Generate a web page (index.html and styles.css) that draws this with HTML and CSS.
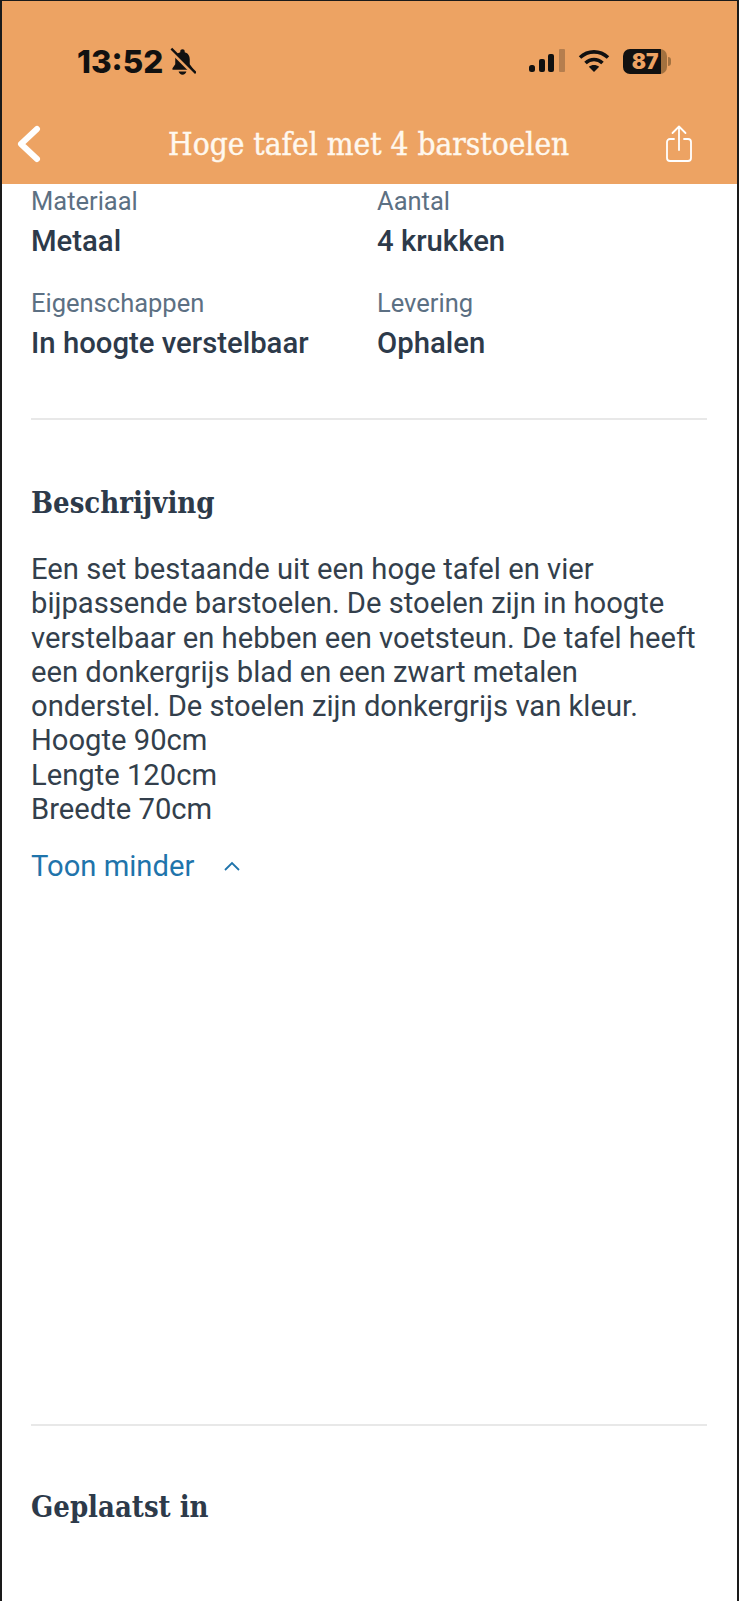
FILE: index.html
```html
<!DOCTYPE html>
<html lang="en">
  <head>
    <meta charset="UTF-8" />
    <title>Hoge tafel met 4 barstoelen</title>
    <link rel="stylesheet" href="styles.css">
  </head>
  <body>
    <div class="phone">
      <!-- Orange top bar -->
      <header class="topbar">
        <div class="status">
          <div class="status-left">
            <span class="time">13:52</span>
            <svg class="bell" width="27" height="29" viewBox="0 0 24 26">
              <path d="M12 2c-1.200 0-2 .8-2 2v.6C6.800 5.500 5.500 8 5.500 11v4.500L3 19v1.500h18V19l-2.500-3.500V11c0-3-1.300-5.500-4.500-6.400V4c0-1.200-.8-2-2-2z" fill="#111"/>
              <path d="M8.500 22h7c-.4 1.700-1.800 2.800-3.500 2.800S8.900 23.700 8.500 22z" fill="#111"/>
              <path d="M2 4l20 20" stroke="#eda363" stroke-width="3"/>
              <path d="M2 1.500l22 22" stroke="#111" stroke-width="2.200"/>
            </svg>
          </div>
          <div class="status-right">
            <svg width="36" height="26" viewBox="0 0 36 26">
              <rect x="0" y="17" width="6" height="7" rx="2.500" fill="#111"/>
              <rect x="10" y="11" width="6" height="13" rx="2" fill="#111"/>
              <rect x="19" y="6" width="6" height="18" rx="2" fill="#111"/>
              <rect x="30" y="1" width="6" height="23" rx="1" fill="#111" opacity="0.25"/>
            </svg>
            <svg class="wifi" width="32" height="24" viewBox="0 0 32 24">
              <path d="M2 8.500C10 1 22 1 30 8.500" fill="none" stroke="#111" stroke-width="3.600"/>
              <path d="M7.500 14c5-4.600 12-4.600 17 0" fill="none" stroke="#111" stroke-width="3.600"/>
              <path d="M16 23l-5.200-5.300c3-2.400 7.400-2.400 10.400 0z" fill="#111"/>
            </svg>
            <div class="battery"><span>87</span></div>
          </div>
        </div>
        <div class="navbar">
          <svg class="back" width="28" height="38" viewBox="0 0 28 38">
            <path d="M22 4L6 19l16 15" fill="none" stroke="#fff" stroke-width="6" stroke-linecap="round" stroke-linejoin="round"/>
          </svg>
          <h1>Hoge tafel met 4 barstoelen</h1>
          <svg class="share" width="28" height="38" viewBox="0 0 28 38">
            <path d="M14 25V2M7.500 8L14 1.500 20.500 8" fill="none" stroke="#fff" stroke-width="1.800" stroke-linecap="round" stroke-linejoin="round"/>
            <path d="M9 14H5a3 3 0 0 0-3 3v16a3 3 0 0 0 3 3h18a3 3 0 0 0 3-3V17a3 3 0 0 0-3-3h-4" fill="none" stroke="#fff" stroke-width="1.800" stroke-linecap="round"/>
          </svg>
        </div>
      </header>

      <main class="content">
        <div class="specs">
          <div class="spec">
            <div class="spec-label">Materiaal</div>
            <div class="spec-value">Metaal</div>
          </div>
          <div class="spec">
            <div class="spec-label">Aantal</div>
            <div class="spec-value">4 krukken</div>
          </div>
          <div class="spec">
            <div class="spec-label">Eigenschappen</div>
            <div class="spec-value">In hoogte verstelbaar</div>
          </div>
          <div class="spec">
            <div class="spec-label">Levering</div>
            <div class="spec-value">Ophalen</div>
          </div>
        </div>

        <hr class="divider" />

        <section class="description">
          <h2>Beschrijving</h2>
          <p>Een set bestaande uit een hoge tafel en vier<br>bijpassende barstoelen. De stoelen zijn in hoogte<br>verstelbaar en hebben een voetsteun. De tafel heeft<br>een donkergrijs blad en een zwart metalen<br>onderstel. De stoelen zijn donkergrijs van kleur.<br>Hoogte 90cm<br>Lengte 120cm<br>Breedte 70cm</p>
          <div class="toggle">
            <span>Toon minder</span>
            <svg width="18" height="12" viewBox="0 0 18 12">
              <path d="M2 10l7-7 7 7" fill="none" stroke="#1f74ab" stroke-width="1.800"/>
            </svg>
          </div>
        </section>

        <hr class="divider lower" />

        <section class="placed">
          <h2>Geplaatst in</h2>
        </section>
      </main>
    </div>
  </body>
</html>
```

FILE: styles.css
```css
html,
body {
  margin: 0;
  padding: 0;
  background: #ffffff;
}

.phone {
  width: 739px;
  height: 1601px;
  box-sizing: border-box;
  border-left: 2px solid #1a1a1a;
  border-right: 2px solid #1a1a1a;
  border-top: 1px solid #1a1a1a;
  overflow: hidden;
  font-family: Roboto, sans-serif;
  color: #2d3a4a;
}

.topbar {
  background: #eda363;
  height: 183px;
}

.status {
  display: flex;
  justify-content: space-between;
  padding: 44px 0 0 75px;
  height: 32px;
}

.status-left {
  display: flex;
  align-items: center;
  gap: 6px;
  height: 32px;
}

.time {
  font-family: Inter, sans-serif;
  font-weight: 800;
  font-size: 31.500px;
  color: #111111;
}

.status-right {
  display: flex;
  align-items: center;
  gap: 13px;
  padding-right: 70px;
  height: 32px;
}

.battery {
  position: relative;
  width: 44px;
  height: 25px;
  background: linear-gradient(to right, #111111 87%, #a3713f 87%);
  border-radius: 7px;
  display: flex;
  align-items: center;
  justify-content: center;
}

/* little nub on the battery */
.battery::after {
  content: "";
  position: absolute;
  right: -4px;
  top: 8px;
  width: 3px;
  height: 9px;
  background: #a3713f;
  border-radius: 0 3px 3px 0;
}

.battery span {
  font-family: Inter, sans-serif;
  font-weight: 900;
  font-size: 21px;
  color: #eda363;
}

.navbar {
  display: flex;
  align-items: center;
  margin-top: 46px;
  padding: 0 44px 0 13px;
  height: 42px;
}

.navbar h1 {
  margin: 0 auto 0 125px;
  font-family: "DejaVu Serif", serif;
  font-stretch: condensed;
  font-weight: 400;
  font-size: 31.400px;
  white-space: nowrap;
  -webkit-text-stroke: 0.4px #fff8ee;
  color: #fff8ee;
}

.content {
  padding: 1px 30px 0 29px;
}

.specs {
  display: grid;
  grid-template-columns: 346px 1fr;
  row-gap: 27px;
}

.spec-label {
  font-size: 25.500px;
  line-height: 32px;
  color: #5c7083;
}

.spec-value {
  font-size: 29.300px;
  font-weight: 500;
  line-height: 38px;
  margin-top: 5px;
}

.divider {
  border: none;
  height: 2px;
  background: #e8e8e8;
  margin: 56px 0 0;
}

.description h2,
.placed h2 {
  margin: 0;
  font-family: "DejaVu Serif", serif;
  font-stretch: condensed;
  font-size: 29px;
  font-weight: 700;
  line-height: 40px;
  color: #2d3a4a;
}

.description {
  padding-top: 63px;
}

.description p {
  margin: 29px 0 0;
  font-size: 29.200px;
  line-height: 34.300px;
  color: #333f4c;
}

.toggle {
  display: flex;
  align-items: center;
  gap: 29px;
  margin-top: 22px;
  font-size: 29.200px;
  line-height: 36px;
  color: #1f74ab;
}

.divider.lower {
  margin-top: 540px;
}

.placed {
  padding-top: 61px;
}
```
